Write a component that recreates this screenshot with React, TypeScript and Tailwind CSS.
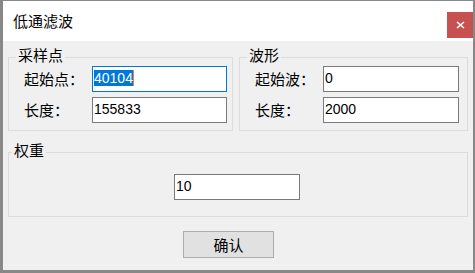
const font = { fontFamily: '"Noto Sans CJK SC", "Noto Sans", sans-serif' };

const Field = ({
  value,
  focused,
  width,
}: {
  value: string;
  focused?: boolean;
  width: string;
}) => (
  <div
    className={`${width} h-[26px] bg-white border flex items-center pl-[1px] ${
      focused ? "border-[#0078d7]" : "border-[#7a7a7a]"
    }`}
  >
    {focused ? (
      <span className="flex items-center">
        <span className="bg-[#0078d7] text-white text-[14px] leading-[16px] font-['Liberation_Sans',sans-serif] -mt-[3px]">
          {value}
        </span>
        <span className="w-[1px] h-[16px] bg-[#e88a2e] -mt-[3px]" />
      </span>
    ) : (
      <span className="text-[14px] leading-[16px] text-black font-['Liberation_Sans',sans-serif] -mt-[3px]">
        {value}
      </span>
    )}
  </div>
);

const Group = ({
  title,
  rows,
  width,
  inputWidth,
}: {
  title: string;
  rows: { label: string; value: string; focused?: boolean }[];
  width: string;
  inputWidth: string;
}) => (
  <div className={`relative ${width} border border-[#dcdcdc] pt-[8px] pb-[7px] flex flex-col gap-[5px]`}>
    <span className="absolute left-[7px] -top-[13px] px-[2px] bg-[#f0f0f0] text-[15px] leading-[20px] text-black">
      {title}
    </span>
    {rows.map((r, i) => (
      <div key={i} className="flex items-center">
        <span className="w-[83px] pl-[15px] text-[15px] leading-[20px] text-black">
          {r.label}
        </span>
        <Field value={r.value} focused={r.focused} width={inputWidth} />
      </div>
    ))}
  </div>
);

export default function App() {
  return (
    <div className="w-[475px] h-[273px] bg-[#888888] pt-[1px] pl-[3px] pr-[2px] pb-[3px]" style={font}>
      <div className="w-[470px] h-[269px] flex flex-col">
        <div className="h-[40px] bg-white flex items-start justify-between">
          <span className="pl-[10px] pt-[10px] text-[15px] leading-[20px] text-black">
            低通滤波
          </span>
          <div className="mt-[11px] w-[26px] h-[26px] bg-[#c75050] flex items-center justify-center">
            <svg width="9" height="8" viewBox="0 0 9 8">
              <path d="M1 1 L8 7 M8 1 L1 7" stroke="white" strokeWidth="1.6" />
            </svg>
          </div>
        </div>
        <div className="flex-1 bg-[#f0f0f0] px-[5px] pt-[16px] flex flex-col">
          <div className="flex gap-[6px]">
            <Group
              title="采样点"
              width="w-[225px]"
              inputWidth="w-[135px]"
              rows={[
                { label: "起始点：", value: "40104", focused: true },
                { label: "长度：", value: "155833" },
              ]}
            />
            <Group
              title="波形"
              width="w-[229px]"
              inputWidth="w-[136px]"
              rows={[
                { label: "起始波：", value: "0" },
                { label: "长度：", value: "2000" },
              ]}
            />
          </div>
          <div className="relative mt-[21px] w-[460px] h-[65px] border border-[#dcdcdc] pt-[21px] pl-[165px]">
            <span className="absolute left-[3px] -top-[13px] px-[2px] bg-[#f0f0f0] text-[15px] leading-[20px] text-black">
              权重
            </span>
            <Field value="10" width="w-[126px]" />
          </div>
          <div className="mt-[14px] ml-[175px] w-[91px] h-[27px] bg-[#e1e1e1] border border-[#adadad] flex items-center justify-center text-[15px] leading-[20px] text-black">
            确认
          </div>
        </div>
      </div>
    </div>
  );
}
